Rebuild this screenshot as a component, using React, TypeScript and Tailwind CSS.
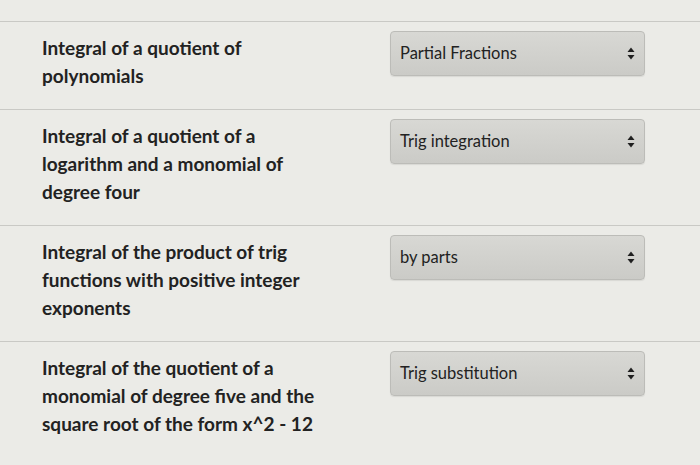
import { useState } from "react"

const ROWS = [
  { answer: "Partial Fractions", lines: ["Integral of a quotient of", "polynomials"] },
  { answer: "Trig integration", lines: ["Integral of a quotient of a", "logarithm and a monomial of", "degree four"] },
  { answer: "by parts", lines: ["Integral of the product of trig", "functions with positive integer", "exponents"] },
  { answer: "Trig substitution", lines: ["Integral of the quotient of a", "monomial of degree five and the", "square root of the form x^2 - 12"] },
]

function SelectArrows() {
  return (
    <svg width="8" height="13" viewBox="0 0 8 13" className="shrink-0">
      <path d="M4 0.5 L7.5 5 H0.5 Z" fill="#1f1f1f" />
      <path d="M4 12.5 L7.5 8 H0.5 Z" fill="#1f1f1f" />
    </svg>
  )
}

function MatchRow({ lines, answer }: { lines: string[]; answer: string }) {
  const [value] = useState(answer)
  return (
    <div className="flex border-t border-[#c9c9c5] pl-[42px] pt-[9px] pb-[19px]">
      <div className="w-[348px] pt-[3px] text-[19px] font-bold leading-[28px] text-[#222]">
        {lines.map((l) => (
          <div key={l}>{l}</div>
        ))}
      </div>
      <div className="flex h-[45px] w-[255px] items-center justify-between rounded-[4px] border border-[#bcbcb8] bg-gradient-to-b from-[#d8d8d4] to-[#cbcbc7] pl-[9px] pr-[9px] shadow-[0_1px_1px_rgba(0,0,0,0.08)]">
        <span className="text-[16.5px] text-[#222]">{value}</span>
        <SelectArrows />
      </div>
    </div>
  )
}

export default function App() {
  return (
    <div
      className="h-[465px] w-[700px] overflow-hidden bg-[#ebebe7] pt-[21px]"
      style={{ fontFamily: "Lato, 'Open Sans', sans-serif" }}
    >
      {ROWS.map((r) => (
        <MatchRow key={r.answer} lines={r.lines} answer={r.answer} />
      ))}
    </div>
  )
}
